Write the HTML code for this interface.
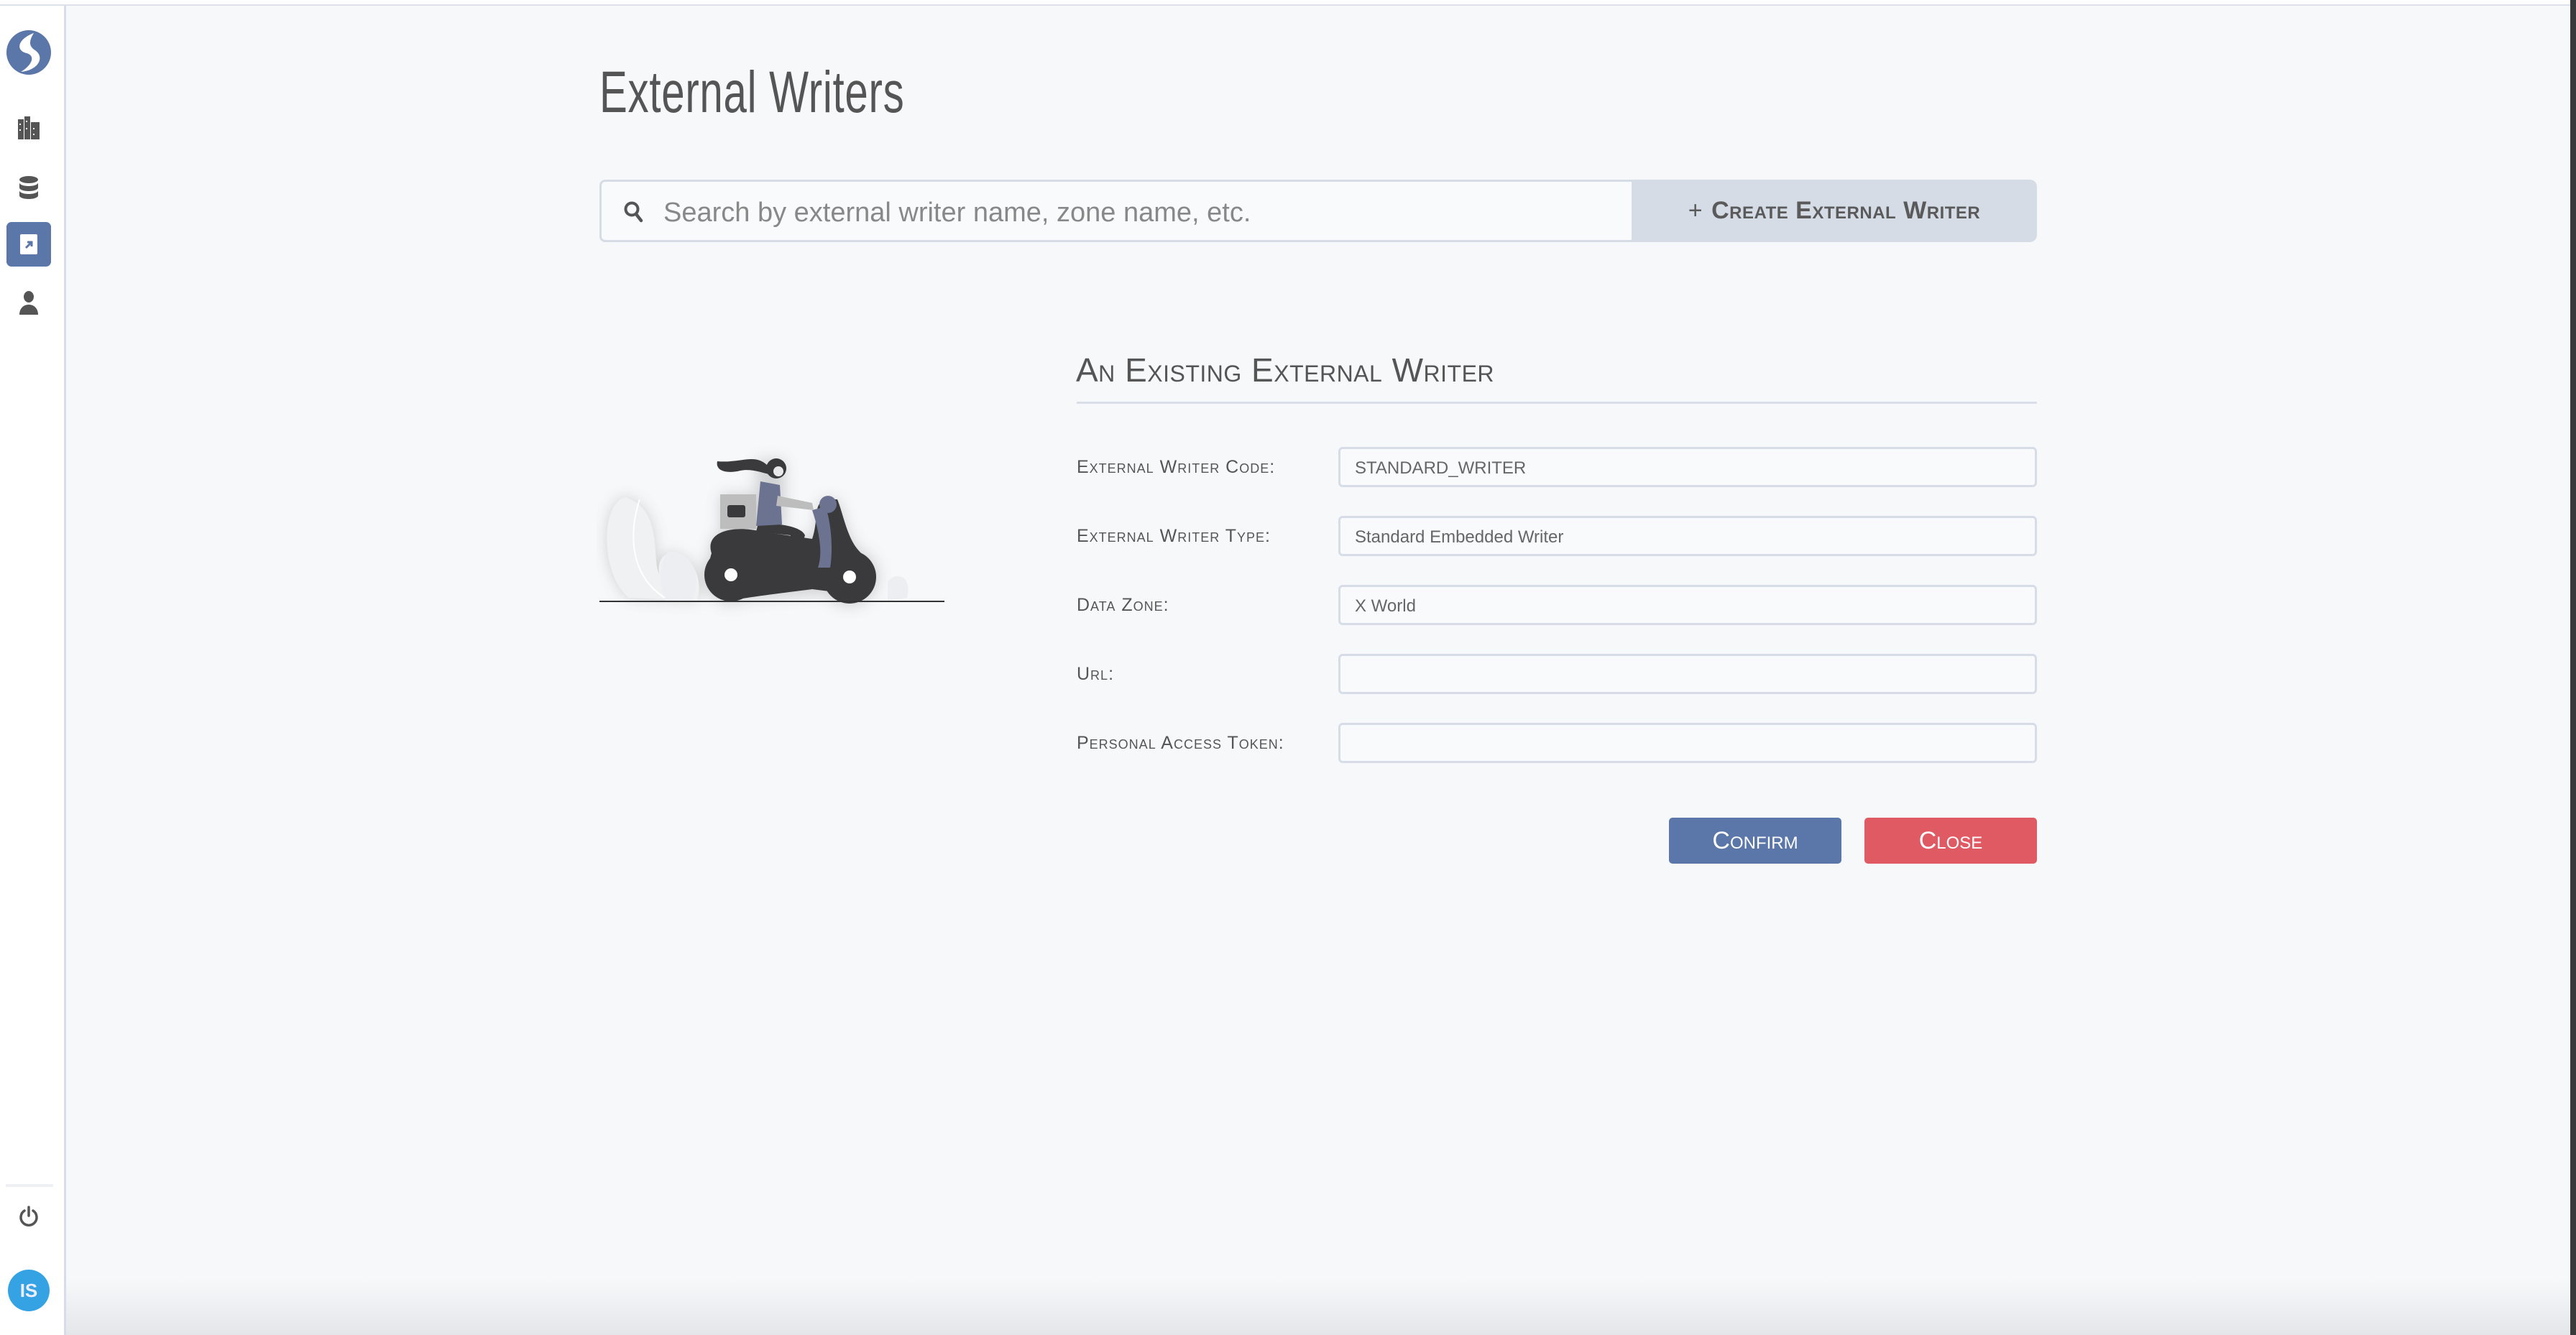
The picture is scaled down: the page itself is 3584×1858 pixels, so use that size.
<!DOCTYPE html>
<html><head><meta charset="utf-8"><style>
*{margin:0;padding:0;box-sizing:border-box}
html,body{width:3584px;height:1858px;overflow:hidden;background:#f7f8fa;font-family:"Liberation Sans",sans-serif;color:#555}
.top{position:absolute;left:0;top:0;width:3584px;height:8px;background:#fff;border-bottom:2px solid #dde2ea}
.side{position:absolute;left:0;top:8px;width:92px;height:1850px;background:#fff;border-right:3px solid #d6dde8}
.ico{position:absolute;left:0;width:80px;display:flex;justify-content:center;align-items:center}
.abs{position:absolute}
.title{position:absolute;left:834px;top:82px;font-size:82px;color:#555;transform:scaleX(.71);transform-origin:left top;white-space:nowrap;letter-spacing:1px}
.search{position:absolute;left:834px;top:250px;width:1440px;height:87px;border:3px solid #d5dce6;border-radius:8px 0 0 8px;background:#f9fafb;border-right:none}
.search span{position:absolute;left:86px;top:22px;font-size:38px;color:#888}
.btn{position:absolute;left:2270px;top:250px;width:564px;height:87px;background:#d5dce6;border-radius:0 10px 10px 0;display:flex;align-items:center;justify-content:center;font-size:34px;font-variant:small-caps;color:#5a5a5a;font-weight:bold;letter-spacing:.5px}
h2{position:absolute;left:1497px;top:488px;font-size:46px;font-weight:normal;font-variant:small-caps;color:#555;letter-spacing:.5px}
.hr{position:absolute;left:1498px;top:559px;width:1336px;height:3px;background:#d9dfe8}
.lbl{position:absolute;left:1498px;font-size:25px;font-variant:small-caps;color:#555;letter-spacing:1px}
.inp{position:absolute;left:1862px;width:972px;height:56px;border:3px solid #d7dde7;border-radius:6px;background:#f9fafb;font-size:24px;color:#666;padding:13px 0 0 20px}
.b2{position:absolute;top:1138px;width:240px;height:64px;border-radius:5px;color:#fff;font-size:34px;font-variant:small-caps;display:flex;align-items:center;justify-content:center}
</style></head><body>
<div class="top"></div>
<div class="side">
 <div class="ico" style="top:32px"><svg width="66" height="66" viewBox="0 0 66 66"><circle cx="33" cy="33" r="31" fill="#5b76a8"/><path d="M40 6 C18 14 14 30 30 34 C44 38 36 52 22 60 C46 58 56 40 42 30 C32 24 34 16 40 6Z" fill="#fff"/></svg></div>
 <div class="ico" style="top:152px"><svg width="38" height="36" viewBox="0 0 38 36" fill="#555"><rect x="4" y="6" width="8" height="28"/><rect x="13" y="2" width="8" height="32"/><rect x="22" y="10" width="12" height="24"/><g fill="#fff"><rect x="6" y="12" width="2" height="2"/><rect x="15" y="8" width="2" height="2"/><rect x="6" y="20" width="2" height="2"/><rect x="15" y="18" width="2" height="2"/><rect x="25" y="18" width="2" height="2"/><rect x="25" y="26" width="2" height="2"/></g></svg></div>
 <div class="ico" style="top:236px"><svg width="30" height="34" viewBox="0 0 30 34" fill="#555"><ellipse cx="15" cy="6" rx="13" ry="5"/><path d="M2 10c0 3 6 5 13 5s13-2 13-5v7c0 3-6 5-13 5S2 20 2 17z"/><path d="M2 21c0 3 6 5 13 5s13-2 13-5v7c0 3-6 5-13 5S2 31 2 28z"/></svg></div>
 <div class="abs" style="left:9px;top:301px;width:62px;height:62px;background:#5b76a8;border-radius:7px;display:flex;align-items:center;justify-content:center"><svg width="24" height="28" viewBox="0 0 24 28"><rect width="24" height="28" rx="2" fill="#fff"/><path d="M8 19l8-8M10 11h6v6" stroke="#5b76a8" stroke-width="3" fill="none"/></svg></div>
 <div class="ico" style="top:396px"><svg width="28" height="34" viewBox="0 0 28 34" fill="#555"><ellipse cx="14" cy="9" rx="7" ry="8"/><path d="M1 34c0-9 6-14 13-14s13 5 13 14z"/></svg></div>
 <div class="abs" style="left:8px;top:1640px;width:66px;height:4px;background:#eef0f3"></div>
 <div class="ico" style="top:1670px"><svg width="30" height="30" viewBox="0 0 30 30"><path d="M9 7A11 11 0 1 0 21 7" stroke="#555" stroke-width="3.5" fill="none" stroke-linecap="round"/><path d="M15 2v12" stroke="#555" stroke-width="3.5" stroke-linecap="round"/></svg></div>
 <div class="abs" style="left:11px;top:1759px;width:58px;height:58px;border-radius:50%;background:#35a3e3;color:#eef;font-weight:bold;font-size:26px;display:flex;align-items:center;justify-content:center">IS</div>
</div>
<div class="title">External Writers</div>
<div class="search"><svg class="abs" style="left:30px;top:26px" width="30" height="32" viewBox="0 0 30 32"><circle cx="12" cy="12" r="8.5" stroke="#555" stroke-width="4" fill="none"/><path d="M18 19l7 9" stroke="#555" stroke-width="4.5" stroke-linecap="round"/></svg><span>Search by external writer name, zone name, etc.</span></div>
<div class="btn"><span style="font-weight:normal;margin-right:12px">+</span>Create External Writer</div>
<svg class="abs" style="left:830px;top:600px" width="500" height="260" viewBox="0 0 500 260">
 <defs><filter id="f" x="-30%" y="-30%" width="160%" height="160%"><feGaussianBlur stdDeviation="10"/></filter></defs>
 <g filter="url(#f)" opacity=".3" fill="#777">
  <path d="M40 92 C5 100 5 200 45 232 L140 236 C150 200 130 170 100 170 C85 175 85 195 88 200 C75 180 95 110 40 92Z"/>
  <circle cx="187" cy="200" r="40"/><circle cx="352" cy="203" r="40"/>
  <path d="M160 170 C150 140 190 130 230 140 L300 150 C310 120 300 100 320 95 L335 95 C345 120 350 160 375 175 C385 200 365 230 340 225 L190 235Z"/>
  <rect x="172" y="88" width="50" height="48"/><rect x="222" y="40" width="40" height="95"/>
 </g>
 <path d="M40 92 C5 100 5 200 45 232 L140 236 C150 200 130 170 100 170 C85 175 85 195 88 200 C75 180 95 110 40 92Z" fill="#f0f1f3"/>
 <path d="M100 168 C130 165 150 200 132 236 L95 236 C85 210 88 180 100 168Z" fill="#eceef1"/>
 <path d="M60 95 C45 140 45 200 95 232" stroke="#fff" stroke-width="2" fill="none"/>
 <rect x="172" y="88" width="50" height="48" fill="#bdbdbd"/><rect x="182" y="103" width="25" height="17" rx="3" fill="#3a3a3c"/>
 <path d="M160 170 C150 140 190 130 230 140 L300 150 C310 120 300 100 320 95 L335 95 C345 120 350 160 375 175 C385 200 365 230 340 225 L300 220 C260 225 220 230 190 235 C160 240 150 200 160 170Z" fill="#3a3a3c"/>
 <circle cx="187" cy="200" r="37" fill="#3a3a3c"/><circle cx="352" cy="203" r="37" fill="#3a3a3c"/>
 <circle cx="187" cy="200" r="9" fill="#fff"/><circle cx="352" cy="203" r="9" fill="#fff"/>
 <path d="M300 110 C310 140 315 170 308 190 L325 190 C330 160 325 120 318 105Z" fill="#6b7390"/>
 <circle cx="322" cy="102" r="12" fill="#6b7390"/>
 <path d="M222 140 L270 145 L262 190 L275 192 L290 145 C285 132 250 128 225 128Z" fill="#3a3a3c"/>
 <path d="M228 70 L255 75 L258 130 L222 132Z" fill="#6b7390"/>
 <path d="M252 90 L300 100 L302 110 L250 104Z" fill="#bdbdbd"/>
 <circle cx="250" cy="52" r="14" fill="#3a3a3c"/><circle cx="253" cy="56" r="7" fill="#e8e8e8"/>
 <path d="M238 48 C220 30 200 45 168 42 C165 55 180 60 200 55 C215 52 230 58 240 60Z" fill="#3a3a3c"/>
 <path d="M405 210 C415 195 440 200 432 232 L405 236Z" fill="#eceef1"/>
 <path d="M4 237 H484" stroke="#333" stroke-width="2"/>
</svg>
<h2>An Existing External Writer</h2>
<div class="hr"></div>
<div class="lbl" style="top:636px">External Writer Code:</div>
<div class="inp" style="top:622px">STANDARD_WRITER</div>
<div class="lbl" style="top:732px">External Writer Type:</div>
<div class="inp" style="top:718px">Standard Embedded Writer</div>
<div class="lbl" style="top:828px">Data Zone:</div>
<div class="inp" style="top:814px">X World</div>
<div class="lbl" style="top:924px">Url:</div>
<div class="inp" style="top:910px"></div>
<div class="lbl" style="top:1020px">Personal Access Token:</div>
<div class="inp" style="top:1006px"></div>
<div class="b2" style="left:2322px;background:#5b76a8">Confirm</div>
<div class="b2" style="left:2594px;background:#e05a64">Close</div>
<div class="abs" style="left:92px;top:1780px;width:3484px;height:78px;background:linear-gradient(#f7f8fa00,#e4e6ea)"></div>
<div class="abs" style="left:3576px;top:0;width:8px;height:1858px;background:#3a3a3c"></div>
</body></html>
